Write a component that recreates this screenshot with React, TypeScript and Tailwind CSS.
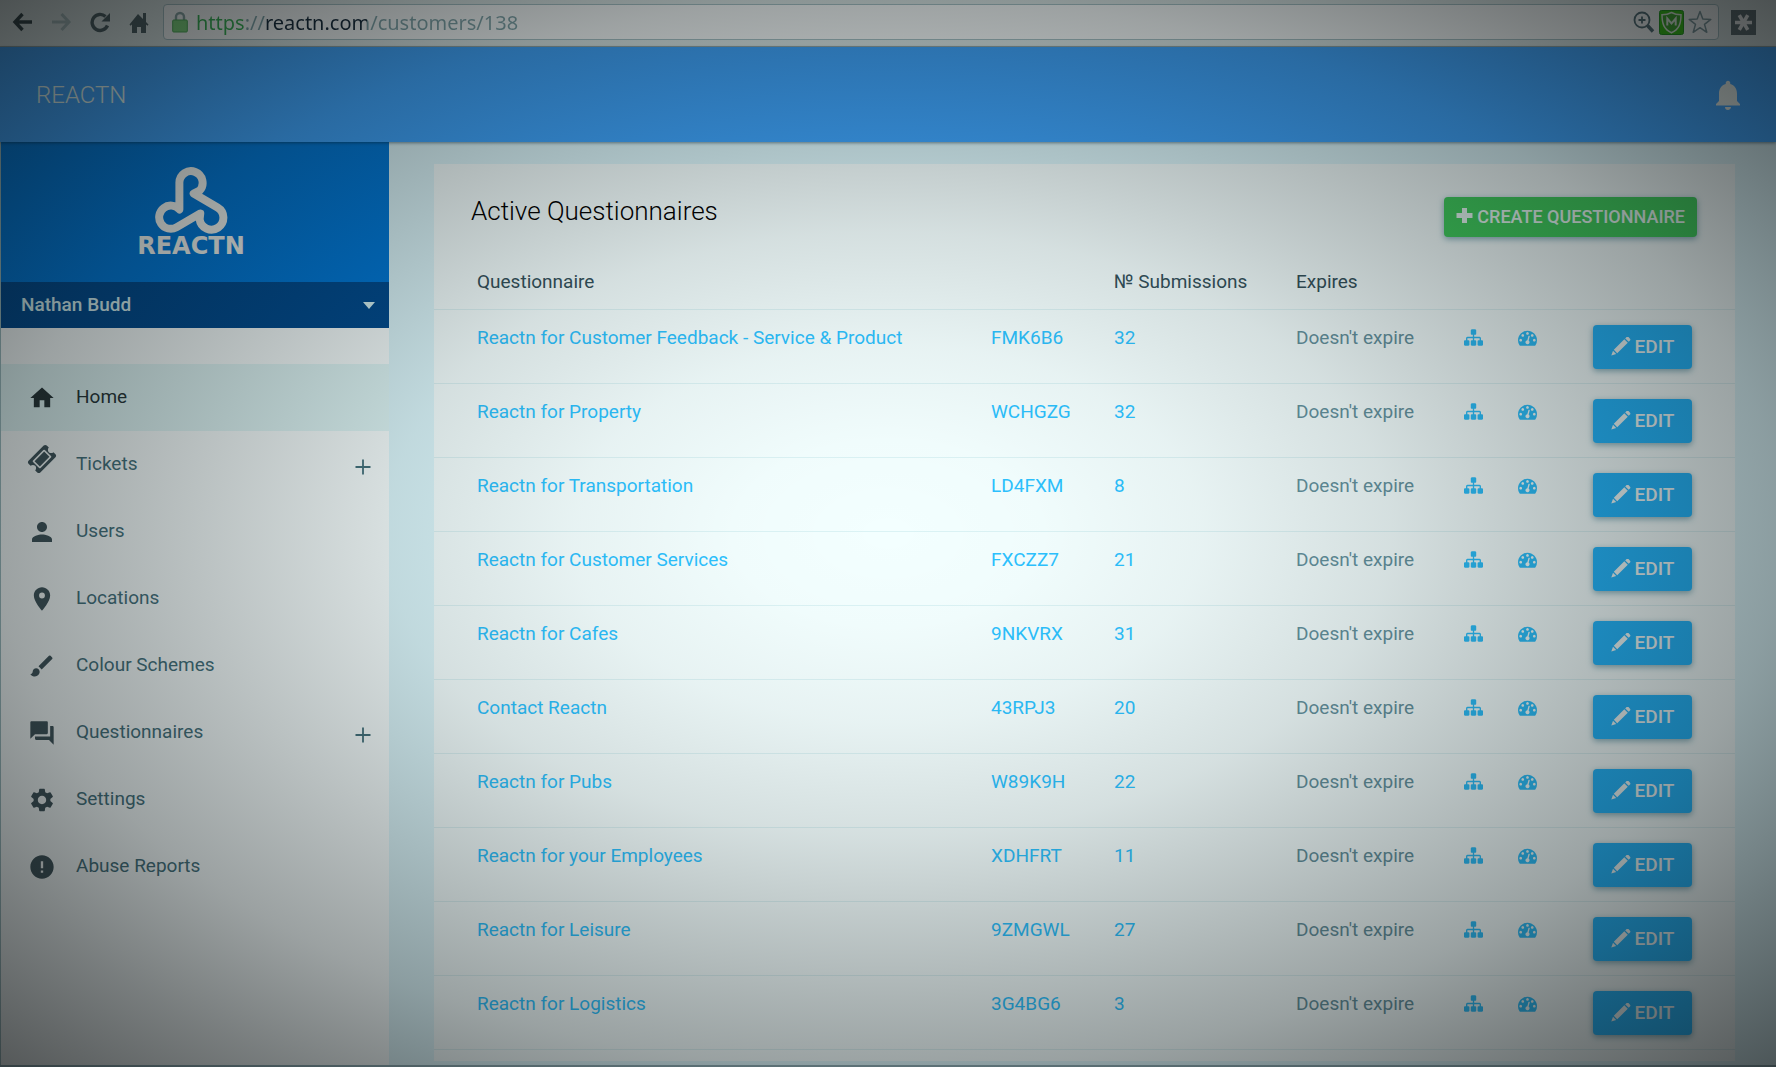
import { useState } from "react";
import type { ReactNode } from "react";
import {
  MdBrush,
  MdError,
  MdForum,
  MdHome,
  MdNotifications,
  MdPerson,
  MdPlace,
  MdSettings,
} from "react-icons/md";

type NavItem = { label: string; icon: ReactNode; active?: boolean; expandable?: boolean };

const TicketIcon = () => (
  <svg viewBox="0 0 1792 1792" className="-mt-3 size-[30px] fill-current" aria-hidden="true">
    <path d="M1024 452l316 316-572 572-316-316zm-211 979l618-618q19-19 19-45t-19-45l-362-362q-18-18-45-18t-45 18l-618 618q-19 19-19 45t19 45l362 362q18 18 45 18t45-18zm889-637l-907 908q-37 37-90.5 37t-90.5-37l-126-126q56-56 56-136t-56-136-136-56-136 56l-125-126q-37-37-37-90.5t37-90.5l907-906q37-37 90.5-37t90.5 37l125 125q-56 56-56 136t56 136 136 56 136-56l126 125q37 37 37 90.5t-37 90.5z" />
  </svg>
);

const SitemapIcon = () => (
  <svg viewBox="0 0 1792 1792" className="size-[19px] fill-current" aria-hidden="true">
    <path d="M1792 1248v320q0 40-28 68t-68 28h-320q-40 0-68-28t-28-68v-320q0-40 28-68t68-28h96v-192h-512v192h96q40 0 68 28t28 68v320q0 40-28 68t-68 28h-320q-40 0-68-28t-28-68v-320q0-40 28-68t68-28h96v-192h-512v192h96q40 0 68 28t28 68v320q0 40-28 68t-68 28h-320q-40 0-68-28t-28-68v-320q0-40 28-68t68-28h96v-192q0-52 38-90t90-38h512v-192h-96q-40 0-68-28t-28-68v-320q0-40 28-68t68-28h320q40 0 68 28t28 68v320q0 40-28 68t-68 28h-96v192h512q52 0 90 38t38 90v192h96q40 0 68 28t28 68z" />
  </svg>
);

const GaugeIcon = () => (
  <svg viewBox="0 0 1792 1792" className="size-[19px] fill-current" aria-hidden="true">
    <path d="M384 1152q0-53-37.5-90.5t-90.5-37.5-90.5 37.5-37.5 90.5 37.5 90.5 90.5 37.5 90.5-37.5 37.5-90.5zm192-448q0-53-37.5-90.5t-90.5-37.5-90.5 37.5-37.5 90.5 37.5 90.5 90.5 37.5 90.5-37.5 37.5-90.5zm428 481l101-382q6-26-7.5-48.5t-38.5-29.5-48 6.5-30 39.5l-101 382q-60 5-107 43.5t-63 98.5q-20 77 20 146t117 89 146-20 89-117q16-60-6-117t-72-91zm660-33q0-53-37.5-90.5t-90.5-37.5-90.5 37.5-37.5 90.5 37.5 90.5 90.5 37.5 90.5-37.5 37.5-90.5zm-640-640q0-53-37.5-90.5t-90.5-37.5-90.5 37.5-37.5 90.5 37.5 90.5 90.5 37.5 90.5-37.5 37.5-90.5zm448 192q0-53-37.5-90.5t-90.5-37.5-90.5 37.5-37.5 90.5 37.5 90.5 90.5 37.5 90.5-37.5 37.5-90.5zm320 448q0 261-141 483-19 29-54 29h-1402q-35 0-54-29-141-221-141-483 0-182 71-348t191-286 286-191 348-71 348 71 286 191 191 286 71 348z" />
  </svg>
);

const PencilIcon = () => (
  <svg viewBox="0 0 20 20" className="size-5 fill-current" aria-hidden="true">
    <path d="M15.6 .1a1.3 1.3 0 0 1 1.9 0l1.500 1.600a1.300 1.300 0 0 1 0 1.800l-1.300 1.300-3.500-3.400zM13.300 2.300l3.500 3.500L6.200 16.300l-3.400-3.500zM2 13.800l3.200 3.200-4.900 1.600z" />
  </svg>
);

const PlusGlyph = () => (
  <svg viewBox="0 0 17 17" className="-mt-1 size-[17px] fill-current" aria-hidden="true">
    <path d="M6 1h5v5h5.5v5H11v5H6v-5H.5V6H6z" />
  </svg>
);

const Logo = () => (
  <svg viewBox="460 104 228 208" className="h-[69px] w-[76px]" fill="none" stroke="#f4faf6" strokeWidth="24" strokeLinejoin="round" aria-hidden="true">
    <path d="M539 238V157A35 35 0 1 1 600 181L582 190L654 232A36 36 0 1 1 600 268L602 250L530 292A35 35 0 1 1 539 238Z" />
  </svg>
);

const navItems: NavItem[] = [
  { label: "Home", icon: <MdHome size={28} />, active: true },
  { label: "Tickets", icon: <TicketIcon />, expandable: true },
  { label: "Users", icon: <MdPerson size={30} /> },
  { label: "Locations", icon: <MdPlace size={28} /> },
  { label: "Colour Schemes", icon: <MdBrush size={28} /> },
  { label: "Questionnaires", icon: <MdForum size={28} />, expandable: true },
  { label: "Settings", icon: <MdSettings size={28} /> },
  { label: "Abuse Reports", icon: <MdError size={28} /> },
];

const questionnaires = [
  { name: "Reactn for Customer Feedback - Service & Product", code: "FMK6B6", submissions: 32 },
  { name: "Reactn for Property", code: "WCHGZG", submissions: 32 },
  { name: "Reactn for Transportation", code: "LD4FXM", submissions: 8 },
  { name: "Reactn for Customer Services", code: "FXCZZ7", submissions: 21 },
  { name: "Reactn for Cafes", code: "9NKVRX", submissions: 31 },
  { name: "Contact Reactn", code: "43RPJ3", submissions: 20 },
  { name: "Reactn for Pubs", code: "W89K9H", submissions: 22 },
  { name: "Reactn for your Employees", code: "XDHFRT", submissions: 11 },
  { name: "Reactn for Leisure", code: "9ZMGWL", submissions: 27 },
  { name: "Reactn for Logistics", code: "3G4BG6", submissions: 3 },
];

function BrowserBar() {
  const [url, setUrl] = useState("https://reactn.com/customers/138");
  return (
    <div className="flex h-[47px] items-center border-b border-[#9fb5b5] bg-[#dcebea] pr-5 pb-0.5 pl-3 text-[#4d6468]">
      <div className="flex items-center gap-[18px]">
        <button aria-label="Back" className="text-[#34494c]">
          <svg viewBox="0 0 21 20" className="h-5 w-[21px]" fill="none" stroke="currentColor" strokeWidth="3.4" aria-hidden="true">
            <path d="M20 10H4M10.5 2L3 10l7.500 8" />
          </svg>
        </button>
        <button aria-label="Forward" className="text-[#aac3c4]">
          <svg viewBox="0 0 21 20" className="h-5 w-[21px]" fill="none" stroke="currentColor" strokeWidth="3" aria-hidden="true">
            <path d="M1 10h16M10.500 2L18 10l-7.500 8" />
          </svg>
        </button>
        <button aria-label="Reload">
          <svg viewBox="0 0 21 21" className="size-[21px]" aria-hidden="true">
            <path d="M17.500 13.500A8 8 0 1 1 15.500 4.500" fill="none" stroke="currentColor" strokeWidth="3.400" />
            <path d="M20 1v8.500h-8.500z" fill="currentColor" />
          </svg>
        </button>
        <button aria-label="Home page">
          <svg viewBox="0 0 20 21" className="h-[21px] w-5 fill-current" aria-hidden="true">
            <path d="M9 2l5 5V1h3v9l2.500 2.500-1 1.200L17 12.500V21h-5v-6H8v6H3v-8.500l-1.500 1.200-1-1.200z" />
          </svg>
        </button>
      </div>
      <form className="ml-3.5 flex h-9 flex-1 items-center rounded-sm border border-[#a5c4c8] bg-[#f8ffff] pr-1.5 pl-2" onSubmit={(e) => e.preventDefault()}>
        <svg viewBox="0 0 16 22" className="h-[22px] w-4" aria-hidden="true">
          <path d="M4 10V6a4 4 0 0 1 8 0v4" fill="none" stroke="#89a9a9" strokeWidth="2.400" />
          <rect x="0.700" y="9" width="14.600" height="12" rx="1" fill="#7cd87e" stroke="#4caf5a" />
        </svg>
        <input
          aria-label="Address"
          value={url}
          onChange={(e) => setUrl(e.target.value)}
          className="ml-2 h-8 min-w-0 flex-1 bg-[linear-gradient(90deg,#35b455_0_49px,#7fa8ad_49px_69px,#142c3c_69px_171px,#7fa8ad_171px)] bg-clip-text font-['Noto_Sans',sans-serif] text-xl text-transparent outline-none"
        />
        <div className="flex items-center gap-1">
          <button type="button" aria-label="Zoom">
            <svg viewBox="0 0 22 22" className="size-[22px]" fill="none" stroke="#54747c" strokeWidth="1.800" aria-hidden="true">
              <circle cx="9" cy="9" r="7.500" />
              <path d="M9 5.500v7M5.500 9h7" />
              <path d="M14.500 14.500L20 20.500" strokeWidth="3.400" />
            </svg>
          </button>
          <button type="button" aria-label="Site safety">
            <svg viewBox="0 0 25 25" className="size-[25px]" aria-hidden="true">
              <rect x="0.500" y="0.500" width="24" height="24" rx="2" fill="#35c714" stroke="#20a020" />
              <path d="M12.500 2.500c3 1.700 6 2.300 9.500 2.300 0 9-2 14.500-9.500 18-7.500-3.500-9.500-9-9.500-18 3.500 0 6.500-.6 9.500-2.300z" fill="#3fae30" stroke="#e6f8e6" strokeWidth="1.500" />
              <path d="M8.300 15.500V8.500l4.200 5 4.200-5v7" fill="none" stroke="#e6f8e6" strokeWidth="2" />
            </svg>
          </button>
          <button type="button" aria-label="Bookmark">
            <svg viewBox="0 0 24 24" className="size-6" fill="none" stroke="#7f9ea3" strokeWidth="1.500" strokeLinejoin="round" aria-hidden="true">
              <path d="M12 1.500l2.800 7.600 8 .3-6.300 5 2.300 7.900-6.800-4.600-6.800 4.600 2.300-7.900-6.300-5 8-.3z" />
            </svg>
          </button>
        </div>
      </form>
      <button aria-label="Extension" className="ml-3">
        <svg viewBox="0 0 25 25" className="size-[25px]" aria-hidden="true">
          <rect width="25" height="25" fill="#5e7276" />
          <path d="M4 12.500h17M8.250 5.140l8.500 14.720M16.750 5.140l-8.500 14.720" stroke="#f0f6f6" strokeWidth="3.600" />
        </svg>
      </button>
    </div>
  );
}

function Sidebar() {
  return (
    <aside className="w-[388px] shrink-0 bg-[#f6ffff]">
      <div className="flex h-[140px] flex-col items-center bg-[#007bdc] pt-[23px] pr-2">
        <Logo />
        <span className="font-['DejaVu_Sans',sans-serif] text-2xl leading-6 font-bold text-[#f4faf6]">REACTN</span>
      </div>
      <button className="flex h-[46px] w-full items-center justify-between bg-[#004d92] pr-[14px] pl-5 text-[19px] font-medium text-[#d6f4f6]">
        Nathan Budd
        <svg viewBox="0 0 12 7" className="h-[7px] w-3 fill-current" aria-hidden="true">
          <path d="M0 0h12L6 7z" />
        </svg>
      </button>
      <nav className="mt-9">
        <ul>
          {navItems.map((item) => (
            <li
              key={item.label}
              className={item.active ? "flex h-[67px] items-center bg-[#dff8f8] text-[#27383b]" : "flex h-[67px] items-center text-[#44747f]"}
            >
              <a href="#" className="flex h-full flex-1 items-center pl-[23px]">
                <span className={item.active ? "flex w-9 justify-center" : "flex w-9 justify-center text-[#40585f]"}>{item.icon}</span>
                <span className="ml-4 text-[19px]">{item.label}</span>
              </a>
              {item.expandable && (
                <button aria-label={"Expand " + item.label} className="mt-1 mr-[18px]">
                  <svg viewBox="0 0 16 16" className="size-4" stroke="currentColor" strokeWidth="1.800" aria-hidden="true">
                    <path d="M8 0.500v15M0.500 8h15" />
                  </svg>
                </button>
              )}
            </li>
          ))}
        </ul>
      </nav>
    </aside>
  );
}

function QuestionnaireTable() {
  return (
    <table className="w-full table-fixed text-left text-[19px] leading-7">
      <colgroup>
        <col />
        <col className="w-[123px]" />
        <col className="w-[182px]" />
        <col className="w-[168px]" />
        <col className="w-[54px]" />
        <col className="w-[75px]" />
        <col className="w-[142px]" />
      </colgroup>
      <thead>
        <tr className="h-14 border-b border-[#dbf3f5] text-[#33525c]">
          <th scope="col" className="pt-0.5 pl-[43px] font-normal">Questionnaire</th>
          <td />
          <th scope="col" className="pt-0.5 font-normal">№ Submissions</th>
          <th scope="col" className="pt-0.5 font-normal">Expires</th>
          <td colSpan={3} />
        </tr>
      </thead>
      <tbody>
        {questionnaires.map((q) => (
          <tr key={q.code} className="h-[74px] border-b border-[#dbf3f5] align-top text-[#2cc2ff]">
            <td className="pt-3.5 pl-[43px]"><a href="#">{q.name}</a></td>
            <td className="pt-3.5"><a href="#">{q.code}</a></td>
            <td className="pt-3.5"><a href="#">{q.submissions}</a></td>
            <td className="pt-3.5 text-[#64939f]">Doesn't expire</td>
            <td className="pt-[17px]"><a href="#" aria-label="Structure" className="inline-block"><SitemapIcon /></a></td>
            <td className="pt-[17px]"><a href="#" aria-label="Dashboard" className="inline-block"><GaugeIcon /></a></td>
            <td className="pt-[15px]">
              <button className="flex h-11 w-[99px] items-center justify-center gap-1 rounded-sm bg-[#24b8ff] text-[19px] font-medium text-[#eefafa] shadow-[0_2px_6px_rgba(60,130,150,0.6)]">
                <PencilIcon />
                EDIT
              </button>
            </td>
          </tr>
        ))}
      </tbody>
    </table>
  );
}

export default function App() {
  return (
    <div className="relative flex min-h-screen flex-col bg-[#dcf8fd] font-[Roboto,sans-serif]">
      <BrowserBar />
      <header className="z-10 flex h-[95px] items-center justify-between bg-[#3ea6ff] pr-[30px] pl-9 shadow-[0_1px_3px_rgba(0,40,60,0.5)]">
        <h1 className="text-2xl font-light text-[#e2faf6]">REACTN</h1>
        <button aria-label="Notifications" className="text-[#e6f2ee]">
          <MdNotifications size={36} />
        </button>
      </header>
      <div className="flex flex-1 border-l border-[#9cc0c4]">
        <Sidebar />
        <main className="flex flex-1 flex-col pt-[22px] pr-[41px] pb-1 pl-[45px]">
          <section className="flex-1 bg-[#f3ffff]">
            <div className="flex h-[89px] items-start justify-between pt-[33px] pr-[38px] pl-[37px]">
              <h2 className="-mt-1 text-[26px] leading-9 font-light text-black">Active Questionnaires</h2>
              <button className="flex h-10 items-center gap-1 rounded-sm bg-[#40d05f] px-3 text-lg font-medium text-[#e6faf4] shadow-[0_2px_6px_rgba(60,130,150,0.6)]">
                <PlusGlyph />
                CREATE QUESTIONNAIRE
              </button>
            </div>
            <QuestionnaireTable />
          </section>
        </main>
      </div>
      <div className="h-[2px] bg-[#8fb0b8]" />
      <div
        aria-hidden="true"
        className="pointer-events-none absolute inset-0 z-20 bg-[radial-gradient(ellipse_farthest-corner_at_50%_50%,rgba(8,9,10,0)_0%,rgba(8,9,10,0.01)_12%,rgba(8,9,10,0.05)_25%,rgba(8,9,10,0.13)_40%,rgba(8,9,10,0.25)_55%,rgba(8,9,10,0.38)_71%,rgba(8,9,10,0.53)_85%,rgba(8,9,10,0.68)_100%)]"
      />
    </div>
  );
}
